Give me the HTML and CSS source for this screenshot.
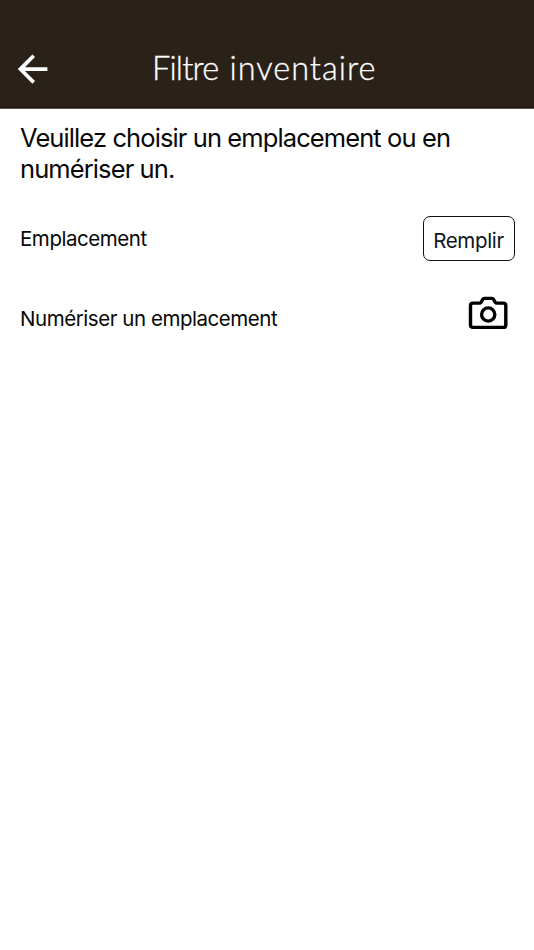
FILE: index.html
```html
<!DOCTYPE html>
<html lang="fr">
<head>
<meta charset="utf-8">
<title>Filtre inventaire</title>
<link rel="stylesheet" href="styles.css">
</head>
<body>
<header class="header">
  <button class="back" aria-label="Retour">
    <svg width="32" height="34" viewBox="0 0 32 34" fill="none" stroke="#fff" stroke-width="3.7"><path d="M16.7 3.7 3.4 17.1 16.7 30.4M3.6 17.1H30.4"/></svg>
  </button>
  <h1 class="title"><span class="title-word">Filtre</span> <span class="title-word wide">inventaire</span></h1>
</header>
<main class="content">
  <p class="intro">Veuillez choisir un emplacement ou en numériser un.</p>
  <div class="row">
    <span class="label">Emplacement</span>
    <button class="fill">Remplir</button>
  </div>
  <div class="row scan">
    <span class="label">Numériser un emplacement</span>
    <button class="camera" aria-label="Caméra">
      <svg width="40" height="34" viewBox="0 0 40 34" fill="none" stroke="#000" stroke-width="3.4" stroke-linejoin="round"><path d="M5 7.1H11.6Q12.5 7.1 13 6.3L14.9 3.2Q15.4 2.4 16.3 2.4H24Q24.9 2.4 25.4 3.2L27.3 6.3Q27.8 7.1 28.7 7.1H35.3Q37.8 7.1 37.8 9.6V28.9Q37.8 31.4 35.3 31.4H5Q2.5 31.4 2.5 28.9V9.6Q2.5 7.1 5 7.1Z"/><circle cx="20.2" cy="18.5" r="6.6"/></svg>
    </button>
  </div>
</main>
</body>
</html>
```
FILE: styles.css
```css
* { box-sizing: border-box; }
body {
  margin: 0;
  min-height: 950px;
  background: #fff;
  color: #080808;
  font-family: Inter, "Liberation Sans", sans-serif;
}
button {
  padding: 0;
  border: 0;
  background: none;
  font: inherit;
}
svg { display: block; }
.header {
  display: grid;
  grid-template-columns: 135px 1fr 140px;
  height: 109px;
  padding: 52px 0 0 17px;
  background: #2a2118;
  border-bottom: 1px solid #5d554d;
  box-shadow: inset 0 -1px #1e150d;
}
.back { width: 32px; height: 34px; }
.title {
  display: flex;
  gap: 11px;
  margin: 0;
  color: #fff;
  font-family: Lato, Inter, sans-serif;
  font-size: 32.5px;
  font-weight: 300;
  line-height: 32px;
  white-space: nowrap;
  -webkit-text-stroke: 0.3px #fff;
}
.title-word { letter-spacing: -0.8px; }
.title-word.wide { letter-spacing: 1px; }
.content { padding: 14px 19px 0 20px; }
.intro {
  margin: 0;
  font-size: 25.5px;
  line-height: 30.5px;
  letter-spacing: -0.9px;
}
.row {
  display: flex;
  justify-content: space-between;
  align-items: center;
  height: 45px;
  margin-top: 32px;
}
.label {
  font-size: 20.5px;
  line-height: 24px;
  letter-spacing: -0.45px;
}
.fill {
  width: 92px;
  height: 45px;
  padding: 3px 1px 0 0;
  border: 1.5px solid #111;
  border-radius: 7px;
  color: #0b1520;
  font-size: 20.5px;
  letter-spacing: -0.35px;
}
.scan { align-items: flex-start; margin-top: 35px; }
.scan .label { margin-top: 11px; }
.camera { width: 40px; height: 34px; margin-right: 7px; }
```
